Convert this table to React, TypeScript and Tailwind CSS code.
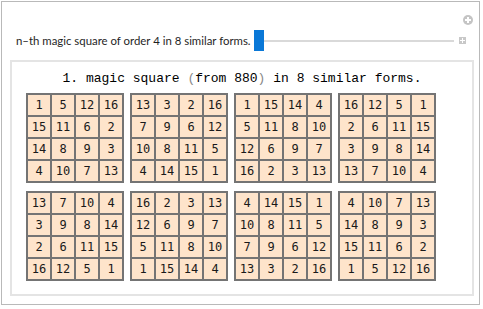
const squares: number[][][] = [
  [[1, 5, 12, 16], [15, 11, 6, 2], [14, 8, 9, 3], [4, 10, 7, 13]],
  [[13, 3, 2, 16], [7, 9, 6, 12], [10, 8, 11, 5], [4, 14, 15, 1]],
  [[1, 15, 14, 4], [5, 11, 8, 10], [12, 6, 9, 7], [16, 2, 3, 13]],
  [[16, 12, 5, 1], [2, 6, 11, 15], [3, 9, 8, 14], [13, 7, 10, 4]],
  [[13, 7, 10, 4], [3, 9, 8, 14], [2, 6, 11, 15], [16, 12, 5, 1]],
  [[16, 2, 3, 13], [12, 6, 9, 7], [5, 11, 8, 10], [1, 15, 14, 4]],
  [[4, 14, 15, 1], [10, 8, 11, 5], [7, 9, 6, 12], [13, 3, 2, 16]],
  [[4, 10, 7, 13], [14, 8, 9, 3], [15, 11, 6, 2], [1, 5, 12, 16]]
];

function MagicSquare({ rows }: { rows: number[][] }) {
  return (
    <div className="grid grid-cols-[22px_22px_22px_22px] gap-[2px] p-[2px] bg-[#747474] w-fit">
      {rows.flat().map((n, i) => (
        <div
          key={i}
          className="h-[20px] bg-[#fee4cb] flex items-center justify-center text-[12px] leading-none text-[#1a1a1a]"
        >
          {n}
        </div>
      ))}
    </div>
  );
}

export default function App() {
  return (
    <div className="relative w-[483px] h-[309px] bg-white">
      <div className="ml-[1px] mt-[1px] w-[479px] h-[304px] border border-[#b9b9b9] flex flex-col">
        <div className="flex items-center mt-[28px] pl-[14px] h-[21px]">
          <span
            className="w-[238px] shrink-0 text-[11.4px] text-[#1f1f1f]"
            style={{ fontFamily: 'Lato, "Noto Sans", sans-serif' }}
          >
            n–th magic square of order 4 in 8 similar forms.
          </span>
          <div className="relative w-[200px] h-[21px]">
            <div className="absolute left-0 right-0 top-[10px] h-[2px] bg-[#d9d9d9]" />
            <div className="absolute left-0 top-0 w-[10px] h-[21px] bg-[#0a78d7]" />
          </div>
          <div className="ml-[5px] w-[7px] h-[7px] bg-[#c8c8c8] relative">
            <div className="absolute left-[3px] top-[1px] w-[1px] h-[5px] bg-white" />
            <div className="absolute left-[1px] top-[3px] w-[5px] h-[1px] bg-white" />
          </div>
        </div>

        <div
          className="ml-[8px] mt-[9px] w-[464px] h-[236px] border-2 border-[#e4e4e4] flex flex-col"
          style={{ fontFamily: '"DejaVu Sans Mono", "Liberation Mono", monospace' }}
        >
          <div
            className="pt-[8px] text-center text-[13px] leading-[17px] text-black"
            style={{ fontFamily: '"Liberation Mono", monospace' }}
          >
            1. magic square <span className="text-[#8a8a8a]">(</span>from 880
            <span className="text-[#8a8a8a]">)</span> in 8 similar forms.
          </div>
          <div className="mt-[6px] pl-[14px] grid grid-cols-[repeat(4,max-content)] gap-x-[6px] gap-y-[8px]">
            {squares.map((sq, i) => (
              <MagicSquare key={i} rows={sq} />
            ))}
          </div>
        </div>
      </div>

      <div className="absolute left-[463px] top-[14px] w-[10px] h-[10px] rounded-full bg-[#c4c4c4]">
        <div className="absolute left-[4px] top-[2px] w-[2px] h-[6px] bg-white" />
        <div className="absolute left-[2px] top-[4px] w-[6px] h-[2px] bg-white" />
      </div>
    </div>
  );
}
